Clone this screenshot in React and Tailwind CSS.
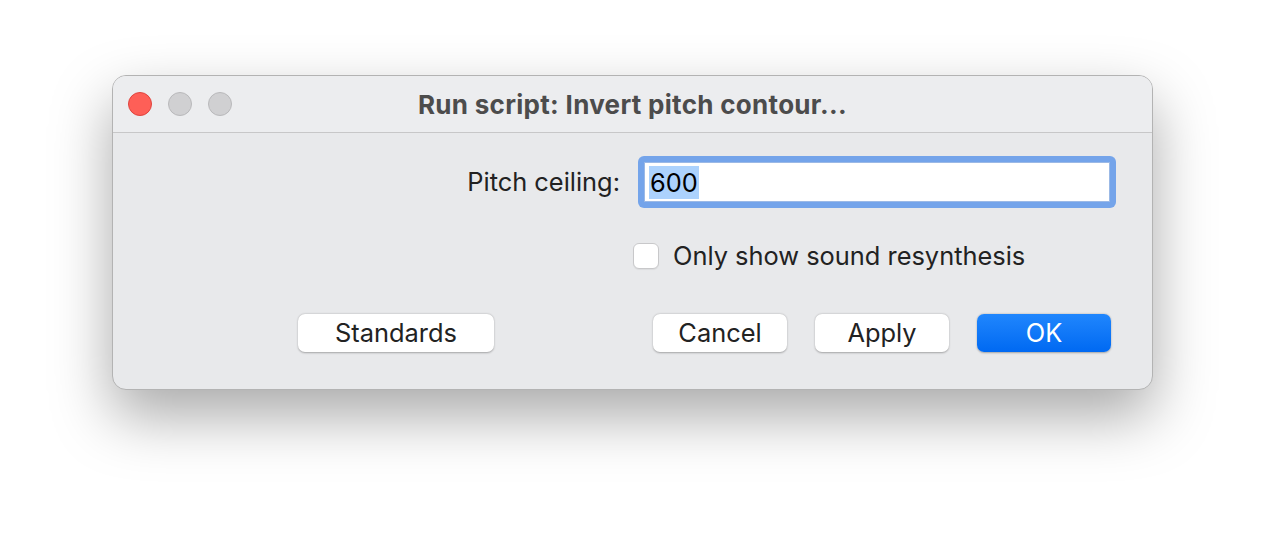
export default function App() {
  const font = { fontFamily: "Inter, 'Noto Sans', sans-serif" };
  return (
    <div className="w-[1264px] h-[538px] bg-white pt-[75px] pl-[112px]" style={font}>
      <div className="w-[1041px] h-[315px] rounded-[14px] border border-[#b3b3b3] bg-[#e8e9eb] shadow-[0_26px_60px_rgba(0,0,0,0.34)] overflow-hidden flex flex-col">
        <div className="relative h-[57px] bg-[#ecedef] border-b border-[#c7c7c8] flex items-center pl-[15px] gap-[16px]">
          <span className="w-[24px] h-[24px] rounded-full bg-[#fe5f57] border border-[#e0443e]" />
          <span className="w-[24px] h-[24px] rounded-full bg-[#d0d0d2] border border-[#b9b9bb]" />
          <span className="w-[24px] h-[24px] rounded-full bg-[#d0d0d2] border border-[#b9b9bb]" />
          <div className="absolute inset-0 flex items-center justify-center text-[26px] font-bold text-[#4c4c4c] tracking-[0.3px]">
            Run script: Invert pitch contour...
          </div>
        </div>
        <div className="flex flex-col pt-[23px]">
          <div className="h-[52px] flex items-center justify-end pr-[36px]">
            <span className="text-[25.4px] text-[#222222] mr-[18px]">Pitch ceiling:</span>
            <div className="w-[478px] h-[52px] rounded-[6px] bg-[#74a4ea] p-[6px]">
              <div className="h-full bg-white border border-[#9bb9e6] flex items-center pl-[4px]">
                <span className="text-[25.4px] text-black bg-[#acd2fd] leading-[33px] px-[1px]">600</span>
              </div>
            </div>
          </div>
          <div className="h-[26px] flex items-center pl-[520px] mt-[35px]">
            <span className="w-[26px] h-[26px] rounded-[6px] bg-white border border-[#c8c8ca] shadow-[0_1px_1px_rgba(0,0,0,0.06)]" />
            <span className="ml-[14px] text-[25.4px] leading-[26px] text-[#222222]">Only show sound resynthesis</span>
          </div>
          <div className="h-[38px] flex items-center pl-[185px] pr-[41px] mt-[45px]">
            <button className="w-[196px] h-[38px] rounded-[7px] bg-white text-[25.4px] leading-[38px] text-[#222222] shadow-[0_0.5px_2px_rgba(0,0,0,0.3)]">Standards</button>
            <div className="ml-auto flex gap-[28px]">
              <button className="w-[134px] h-[38px] rounded-[7px] bg-white text-[25.4px] leading-[38px] text-[#222222] shadow-[0_0.5px_2px_rgba(0,0,0,0.3)]">Cancel</button>
              <button className="w-[134px] h-[38px] rounded-[7px] bg-white text-[25.4px] leading-[38px] text-[#222222] shadow-[0_0.5px_2px_rgba(0,0,0,0.3)]">Apply</button>
              <button className="w-[134px] h-[38px] rounded-[7px] bg-gradient-to-b from-[#1f86fd] to-[#0069f2] text-[25.4px] leading-[38px] text-white shadow-[0_0.5px_2px_rgba(0,0,0,0.3)]">OK</button>
            </div>
          </div>
        </div>
      </div>
    </div>
  );
}
